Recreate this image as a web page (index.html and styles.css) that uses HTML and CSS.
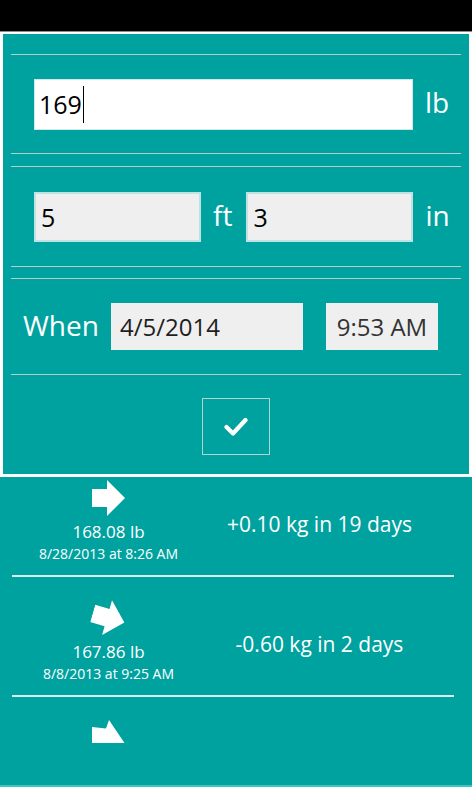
FILE: index.html
```html
<!DOCTYPE html>
<html>
<head>
	<meta charset="utf-8">
	<title>Weight tracker</title>
	<link rel="stylesheet" href="styles.css">
</head>
<body>
	<div class="status"></div>

	<div class="panel">
		<div class="group group-weight">
			<div class="field field-wide"><span class="value">169</span><span class="caret"></span></div>
			<span class="unit">lb</span>
		</div>
		<div class="group group-height">
			<div class="field field-short"><span class="value">5</span></div>
			<span class="unit unit-ft">ft</span>
			<div class="field field-short"><span class="value">3</span></div>
			<span class="unit">in</span>
		</div>
		<div class="group group-when">
			<span class="when">When</span>
			<div class="picker picker-date">4/5/2014</div>
			<div class="picker picker-time">9:53 AM</div>
		</div>
		<div class="actions">
			<button class="accept" type="button">
				<svg width="24" height="20" viewBox="0 0 24 20"><polyline points="2.5,10 9,16.5 21.5,3" fill="none" stroke="#fff" stroke-width="4.2" stroke-linecap="round" stroke-linejoin="round"/></svg>
			</button>
		</div>
	</div>

	<div class="history">
		<ul class="entries">
			<li class="entry">
				<div class="entry-left">
					<svg class="trend" width="33" height="36" viewBox="0 0 33 36"><polygon points="0,9 15,9 15,0 33,18 15,36 15,27 0,27" fill="#fff"/></svg>
					<div class="entry-weight">168.08 lb</div>
					<div class="entry-date">8/28/2013 at 8:26 AM</div>
				</div>
				<div class="entry-change">+0.10 kg in 19 days</div>
			</li>
			<li class="entry">
				<div class="entry-left">
					<svg class="trend trend-down" width="33" height="36" viewBox="0 0 33 36"><polygon points="0,9 15,9 15,0 33,18 15,36 15,27 0,27" fill="#fff"/></svg>
					<div class="entry-weight">167.86 lb</div>
					<div class="entry-date">8/8/2013 at 9:25 AM</div>
				</div>
				<div class="entry-change">-0.60 kg in 2 days</div>
			</li>
			<li class="entry">
				<div class="entry-left">
					<svg class="trend" width="33" height="36" viewBox="0 0 33 36"><polygon points="0,7 14,8.5 17,0 32.5,23 0,23" fill="#fff"/></svg>
				</div>
			</li>
		</ul>
	</div>
</body>
</html>
```

FILE: styles.css
```css
html, body {
	margin: 0;
	padding: 0;
}
body {
	width: 472px;
	height: 787px;
	overflow: hidden;
	background-color: #fff;
	font-family: "Segoe UI", "Open Sans", sans-serif;
	color: #fff;
}

.status {
	height: 31px;
	background-color: #000;
	border-bottom: 1px solid #8c8c8c;
}

.panel {
	box-sizing: border-box;
	height: 440px;
	margin: 2px 3px 0;
	padding: 20px 8px 0;
	background-color: #00a29f;
}

.group {
	box-sizing: border-box;
	display: flex;
	align-items: center;
	border-top: 1px solid #b9cccb;
	border-bottom: 1px solid #b9cccb;
}
.group-weight {
	height: 100px;
	padding-left: 23px;
}
.group-height {
	height: 101px;
	margin-top: 12px;
	padding-left: 23px;
}
.group-when {
	height: 97px;
	margin-top: 11px;
	padding-left: 12px;
}

.field {
	box-sizing: border-box;
	display: flex;
	align-items: center;
	color: #000;
	font-size: 25px;
}
.field-wide {
	width: 379px;
	height: 51px;
	padding-left: 4px;
	background-color: #fff;
	border: 1px solid #cfe8e8;
}
.field-short {
	width: 167px;
	height: 50px;
	padding-left: 5px;
	background-color: #efefef;
	border: 2px solid #bfe3e2;
}
.caret {
	display: inline-block;
	width: 1px;
	height: 37px;
	margin-left: 1px;
	background-color: #000;
}

.unit {
	font-size: 28px;
	margin: -4px 11px 0 12px;
}
.unit-ft {
	margin-right: 14px;
}

.when {
	font-size: 28px;
	margin-top: -3px;
}
.picker {
	box-sizing: border-box;
	height: 47px;
	display: flex;
	align-items: center;
	background-color: #efefef;
	font-size: 24px;
}
.picker-date {
	width: 192px;
	margin-left: 12px;
	padding-left: 9px;
	color: #1e1e1e;
}
.picker-time {
	width: 112px;
	margin-left: 23px;
	justify-content: center;
	color: #333;
}

.actions {
	display: flex;
	justify-content: center;
	padding-top: 23px;
}
.accept {
	box-sizing: border-box;
	width: 68px;
	height: 57px;
	padding: 0;
	display: flex;
	align-items: center;
	justify-content: center;
	background: transparent;
	border: 1px solid #b3d3d2;
}

.history {
	box-sizing: border-box;
	height: 310px;
	margin-top: 3px;
	overflow: hidden;
	background-color: #00a29f;
	border-bottom: 2px solid #3fc4c1;
}
.entries {
	list-style: none;
	margin: -20px 0 0;
	padding: 0;
}
.entry {
	display: grid;
	grid-template-columns: 193px 229px;
	margin: 0 18px 0 12px;
	border-bottom: 2px solid #dcefee;
}
.entry:last-child {
	border-bottom: none;
}
.entry-left {
	display: flex;
	flex-direction: column;
	align-items: center;
	padding: 23px 0 12px;
}
.trend {
	display: block;
}
.trend-down {
	transform: rotate(16deg);
}
.entry-weight {
	font-size: 17px;
	margin-top: 4px;
}
.entry-date {
	font-size: 14px;
	margin-top: 1px;
}
.entry-change {
	text-align: center;
	font-size: 21px;
	padding-top: 53px;
}
```
